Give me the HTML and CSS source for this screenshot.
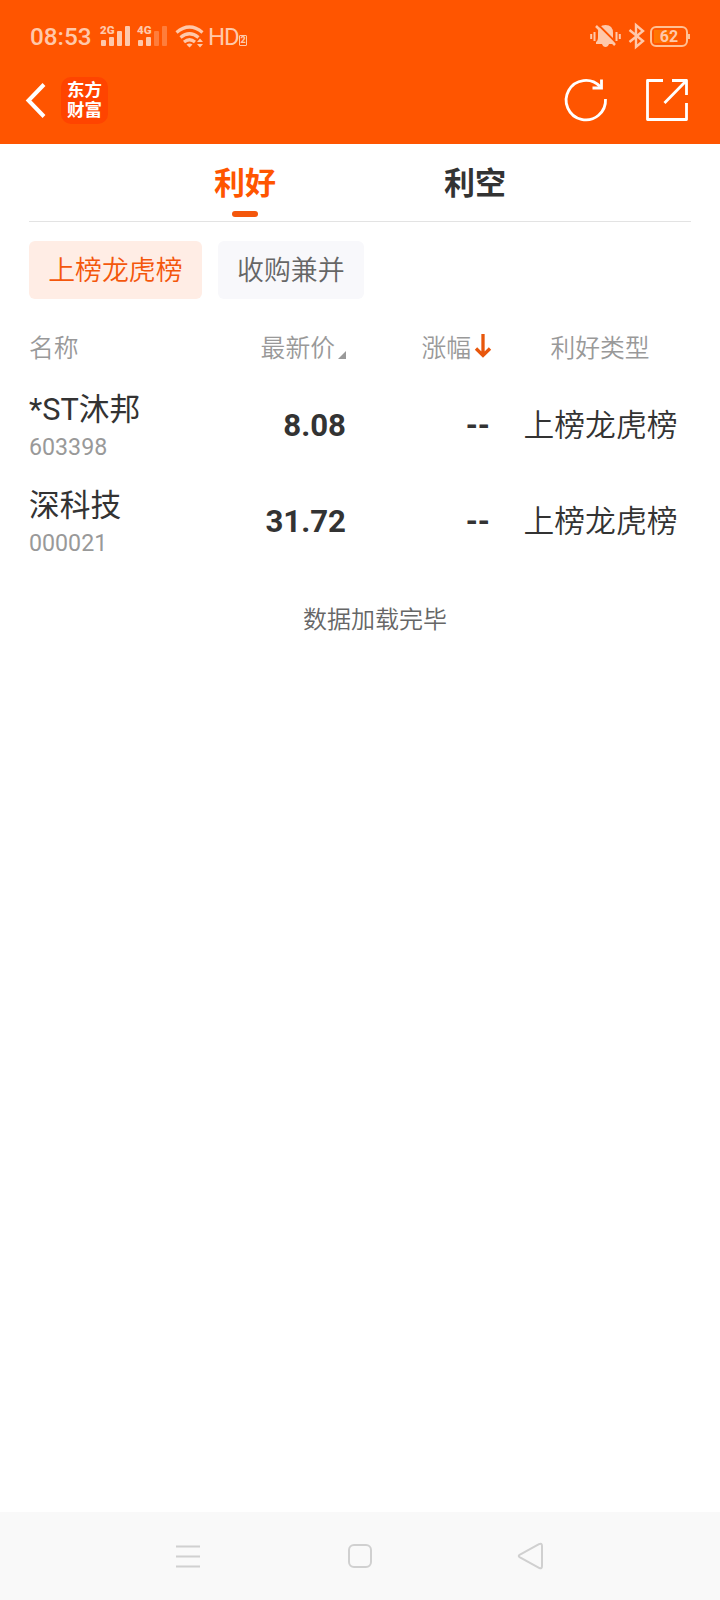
FILE: index.html
```
<!DOCTYPE html>
<html lang="zh-CN">
<head>
    <meta charset="UTF-8">
    <meta name="viewport" content="width=device-width, initial-scale=1.0">
    <title>利好</title>
    <link rel="stylesheet" href="styles.css">
</head>
<body>
    <header class="header">
        <div class="status-bar">
            <span class="time">08:53</span>
            <svg class="signal" width="30" height="22" viewBox="0 0 30 22">
                <text x="-1" y="9">2G</text>
                <rect x="0" y="15" width="5" height="6" rx="1"/>
                <rect x="8" y="12" width="5" height="9" rx="1"/>
                <rect x="16" y="6" width="5" height="15" rx="1"/>
                <rect x="24" y="1" width="5" height="20" rx="1"/>
            </svg>
            <svg class="signal" width="30" height="22" viewBox="0 0 30 22">
                <text x="-1" y="9">4G</text>
                <rect x="0" y="15" width="5" height="6" rx="1"/>
                <rect x="8" y="12" width="5" height="9" rx="1"/>
                <rect class="dim" x="16" y="6" width="5" height="15" rx="1"/>
                <rect class="dim" x="24" y="1" width="5" height="20" rx="1"/>
            </svg>
            <svg class="wifi" width="30" height="24" viewBox="0 0 30 24">
                <g fill="none" stroke="#ffc8aa" stroke-width="3.200">
                    <path d="M1.500 8.500Q14.500 -2.500 27.500 8.500"/>
                    <path d="M5.500 13.500Q14.500 6 23.500 13.500"/>
                    <path d="M9 18Q14.500 13.500 20 18"/>
                </g>
                <path d="M11.500 20.500Q14.500 18.500 17.500 20.500L14.500 23.500Z M22 18L25 14.500L28 18Z M22 20H28L25 23.500Z" fill="#ffc8aa"/>
            </svg>
            <span class="hd">HD</span>
            <span class="hd-sim">2</span>
            <div class="status-right">
                <svg width="32" height="26" viewBox="0 0 32 26">
                    <path d="M6 19Q8 18 8 14V10Q8 2 15.500 2Q23 2 23 10V15Q23 18 25 20V21H6Z M12 21H19Q18 24 15.500 24Q13 24 12 21Z" fill="#ffc8aa"/>
                    <path d="M8 1.500L27 20.500" stroke="#ff5500" stroke-width="2"/>
                    <path d="M6 3L25 22" stroke="#ffc8aa" stroke-width="2.500"/>
                    <path d="M1.200 11V16M4.500 9V18M26.500 9V18M29.800 11V16" stroke="#ffc8aa" stroke-width="2"/>
                </svg>
                <svg width="18" height="28" viewBox="0 0 18 28">
                    <path d="M1.500 8L15 19L8 25V3L15 9L1.500 20" fill="none" stroke="#ffc8aa" stroke-width="2.400"/>
                </svg>
                <div class="battery"><span>62</span></div>
            </div>
        </div>
        <div class="nav-bar">
            <svg width="20" height="36" viewBox="0 0 20 36">
                <path d="M18 2.500L2.500 18.500L18 34.500" fill="none" stroke="#fff" stroke-width="4"/>
            </svg>
            <div class="logo">东方<br>财富</div>
            <svg class="refresh" width="44" height="44" viewBox="0 0 44 44">
                <path d="M41.500 21A19.700 19.700 0 1 1 36 8.500" fill="none" stroke="#fff" stroke-width="2.800"/>
                <path d="M37.500 1.500V10H28.500" fill="none" stroke="#fff" stroke-width="2.800"/>
            </svg>
            <svg width="44" height="44" viewBox="0 0 44 44">
                <path d="M18 2.500H2.500V41.500H41.500V25M27 2.500H41.500V17M41 3L19.500 25" fill="none" stroke="#fff" stroke-width="2.800" stroke-linejoin="round"/>
            </svg>
        </div>
    </header>

    <main class="content">
        <nav class="tabs">
            <div class="tab active">利好</div>
            <div class="tab">利空</div>
        </nav>
        <div class="chips">
            <div class="chip active">上榜龙虎榜</div>
            <div class="chip">收购兼并</div>
        </div>
        <div class="row row-head">
            <div>名称</div>
            <div class="col-price">最新价<svg class="sort" width="8" height="8" viewBox="0 0 8 8"><path d="M8 0V8H0Z" fill="#999"/></svg></div>
            <div class="col-change">涨幅<svg class="arrow" width="16" height="24" viewBox="0 0 16 24"><path d="M8 0V21M1 14.500L8 21.500L15 14.500" fill="none" stroke="#e8570c" stroke-width="3.300"/></svg></div>
            <div class="col-type">利好类型</div>
        </div>
        <div class="row">
            <div>
                <div class="name">*ST沐邦</div>
                <div class="code">603398</div>
            </div>
            <div class="col-price">8.08</div>
            <div class="col-change">--</div>
            <div class="col-type">上榜龙虎榜</div>
        </div>
        <div class="row">
            <div>
                <div class="name">深科技</div>
                <div class="code">000021</div>
            </div>
            <div class="col-price">31.72</div>
            <div class="col-change">--</div>
            <div class="col-type">上榜龙虎榜</div>
        </div>
        <div class="load-end">数据加载完毕</div>
    </main>

    <footer class="system-nav">
        <svg width="26" height="28" viewBox="0 0 26 28">
            <path d="M1 4.500H25M1 14.500H25M1 24.500H25"/>
        </svg>
        <svg width="26" height="28" viewBox="0 0 26 28">
            <rect x="2" y="3" width="22" height="22" rx="5"/>
        </svg>
        <svg width="26" height="28" viewBox="0 0 26 28">
            <path d="M20 2.200Q23 .5 23 4V24Q23 27.500 20 25.800L1 15.500Q-1.500 14 1 12.500Z"/>
        </svg>
    </footer>
</body>
</html>
```
FILE: styles.css
```
* {
    margin: 0;
    padding: 0;
    box-sizing: border-box;
}

body {
    font-family: Roboto, 'Noto Sans CJK SC', sans-serif;
    background-color: #fff;
    color: #333;
    height: 1600px;
    display: flex;
    flex-direction: column;
    overflow: hidden;
}

svg {
    display: block;
    flex: none;
    overflow: visible;
}

.header {
    height: 144px;
    background-color: #ff5500;
}

.status-bar {
    display: flex;
    align-items: center;
    height: 72px;
    padding: 0 30px;
    color: #ffc8aa;
}

.time {
    width: 71px;
    padding-top: 1px;
    font-size: 24.3px;
    font-weight: 500;
    line-height: 28px;
}

.signal {
    margin-right: 7px;
    fill: #ffc8aa;
}

.signal text {
    font-size: 11.5px;
    font-weight: 900;
}

.signal .dim {
    opacity: 0.35;
}

.wifi {
    margin-right: 3px;
}

.hd {
    width: 31px;
    padding-top: 1px;
    font-size: 24px;
    line-height: 28px;
    letter-spacing: -1px;
}

.hd-sim {
    width: 8px;
    height: 11px;
    margin-top: 8px;
    border: 1px solid #ffc8aa;
    border-radius: 1px;
    font-size: 9px;
    font-weight: 900;
    line-height: 9px;
    text-align: center;
}

.status-right {
    display: flex;
    align-items: center;
    margin-left: auto;
}

.status-right svg {
    margin-right: 6px;
}

.battery {
    position: relative;
    width: 38px;
    height: 21px;
    margin: 0 2px 0 -2px;
    border: 2px solid #ffc094;
    border-radius: 6px;
    background: linear-gradient(to right, #ff7800, #ff6400) 2px 2px / 20px 13px no-repeat;
    font-size: 16px;
    font-weight: 700;
    line-height: 17px;
    text-align: center;
}

.battery::after {
    content: "";
    position: absolute;
    top: 6px;
    right: -4px;
    width: 2px;
    height: 5px;
    background-color: #ffc094;
}

.nav-bar {
    display: flex;
    align-items: center;
    height: 56px;
    padding: 0 31px 0 26px;
}

.logo {
    width: 47px;
    height: 47px;
    margin-left: 15px;
    padding-top: 3px;
    border-radius: 10px;
    background-color: #ff4400;
    color: #fff;
    font-size: 17.5px;
    font-weight: 700;
    line-height: 20px;
    text-align: center;
}

.refresh {
    margin: 0 37px 0 auto;
}

.content {
    flex: 1;
    padding: 0 29px;
}

.tabs {
    display: flex;
    justify-content: center;
    height: 78px;
    border-bottom: 1px solid #e3e3e3;
}

.tab {
    position: relative;
    width: 230px;
    padding-top: 1px;
    font-size: 31px;
    font-weight: 700;
    line-height: 78px;
    text-align: center;
}

.tab.active {
    color: #ff5500;
}

.tab.active::after {
    content: "";
    position: absolute;
    left: 102px;
    bottom: 4px;
    width: 26px;
    height: 6px;
    border-radius: 3px;
    background-color: #f4570c;
}

.chips {
    display: flex;
    gap: 16px;
    padding-top: 19px;
}

.chip {
    height: 58px;
    padding: 0 19.2px;
    border-radius: 6px;
    background-color: #f8f8fb;
    color: #666;
    font-size: 26.9px;
    font-weight: 350;
    line-height: 60px;
}

.chip.active {
    background-color: #ffede5;
    color: #f4570c;
}

.row {
    display: grid;
    grid-template-columns: 167px 150px 144px 221px;
    align-items: center;
    height: 96px;
    font-size: 30.8px;
}

.row-head {
    height: 79px;
    padding-top: 14px;
    color: #999;
    font-size: 24.8px;
    font-weight: 350;
}

.name {
    padding-top: 2px;
    line-height: 42px;
    font-size: 30.7px;
}

.code {
    color: #999;
    font-size: 23.2px;
    line-height: 32px;
    padding-bottom: 2px;
}

.col-price,
.col-change {
    padding-bottom: 2px;
    text-align: right;
    font-weight: 700;
}

.col-price {
    font-size: 31.2px;
}

.row-head .col-price,
.row-head .col-change {
    display: flex;
    justify-content: flex-end;
    align-items: center;
    padding-bottom: 0;
    font-size: 24.8px;
    font-weight: 350;
}

.sort {
    margin: 19px 0 0 3px;
}

.arrow {
    margin: 0 -1px 0 4px;
}

.col-type {
    padding-bottom: 8px;
    font-weight: 350;
    text-align: center;
}

.row-head .col-type {
    padding: 0 1px 0 0;
}

.load-end {
    margin-top: 32px;
    padding-left: 30px;
    color: #666;
    font-size: 24px;
    font-weight: 350;
    line-height: 36px;
    text-align: center;
}

.system-nav {
    display: flex;
    justify-content: center;
    align-items: center;
    gap: 146px;
    height: 88px;
    background-color: #f9f9f9;
}

.system-nav svg {
    fill: none;
    stroke: #d0d0d0;
    stroke-width: 2;
}
```
